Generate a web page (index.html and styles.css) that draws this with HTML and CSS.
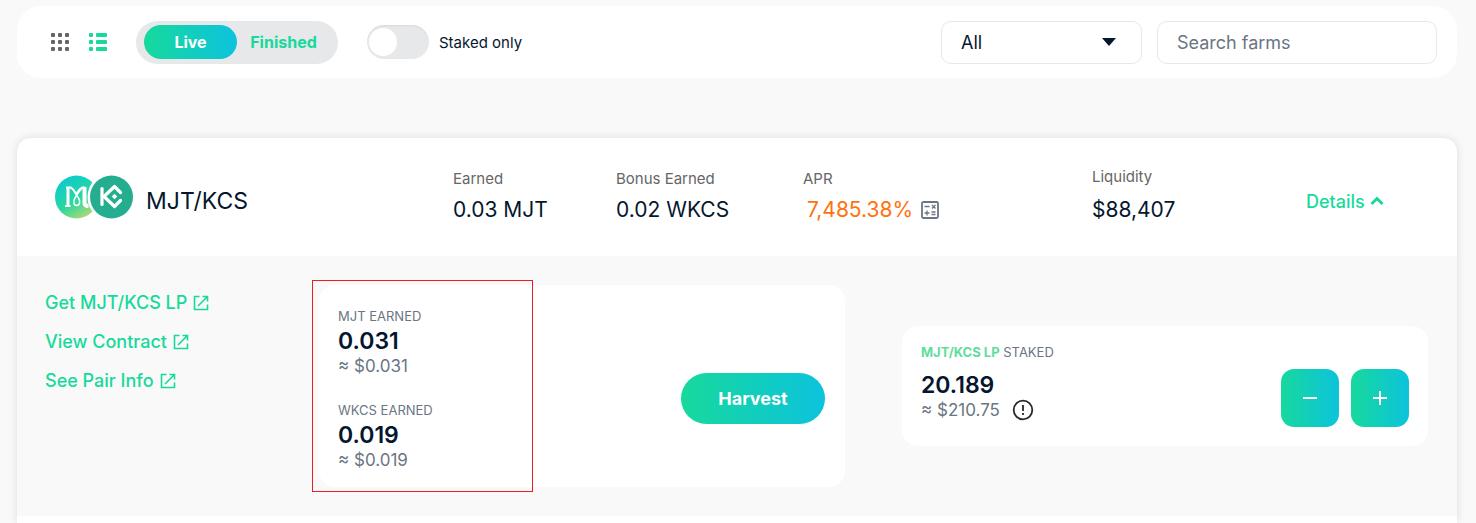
FILE: index.html
```html
<!DOCTYPE html>
<html lang="en">
    <head>
        <title>Farms</title>
        <meta charset="UTF-8">
        <meta name="viewport" content="width=device-width, initial-scale=1">
        <link rel="stylesheet" href="styles.css">
    </head>
    <body>
        <div class="toolbar">
            <div class="view-buttons">
                <button class="view-button" type="button" aria-label="Card view">
                    <svg width="18" height="18" viewBox="0 0 18 18" fill="currentColor">
                        <rect x="0" y="0" width="4" height="4" rx="1"/><rect x="7" y="0" width="4" height="4" rx="1"/><rect x="14" y="0" width="4" height="4" rx="1"/>
                        <rect x="0" y="7" width="4" height="4" rx="1"/><rect x="7" y="7" width="4" height="4" rx="1"/><rect x="14" y="7" width="4" height="4" rx="1"/>
                        <rect x="0" y="14" width="4" height="4" rx="1"/><rect x="7" y="14" width="4" height="4" rx="1"/><rect x="14" y="14" width="4" height="4" rx="1"/>
                    </svg>
                </button>
                <button class="view-button active" type="button" aria-label="Table view">
                    <svg width="18" height="18" viewBox="0 0 18 18" fill="currentColor">
                        <rect x="0" y="0" width="4" height="4" rx="1"/><rect x="7" y="0" width="11" height="4" rx="1"/>
                        <rect x="0" y="7" width="4" height="4" rx="1"/><rect x="7" y="7" width="11" height="4" rx="1"/>
                        <rect x="0" y="14" width="4" height="4" rx="1"/><rect x="7" y="14" width="11" height="4" rx="1"/>
                    </svg>
                </button>
            </div>
            <div class="tabs">
                <button class="tab selected" type="button">Live</button>
                <button class="tab" type="button">Finished</button>
            </div>
            <label class="staked">
                <input class="switch" type="checkbox">
                Staked only
            </label>
            <div class="filters">
                <div class="select-box">
                    <select class="field" aria-label="Filter farms">
                        <option>All</option>
                        <option>Hot</option>
                        <option>APR</option>
                        <option>Liquidity</option>
                    </select>
                    <svg class="caret" width="14" height="8" viewBox="0 0 14 8" fill="currentColor"><path d="M0 0h14L7 8z"/></svg>
                </div>
                <input class="field search" type="text" placeholder="Search farms" aria-label="Search farms">
            </div>
        </div>

        <div class="farms">
            <div class="farm-row">
                <div class="pair">
                    <svg class="tokens" width="78" height="44" viewBox="0 0 78 44">
                        <defs>
                            <linearGradient id="mjt" x1="0.2" y1="0" x2="0.8" y2="1">
                                <stop offset="0" stop-color="#0bc9d3"/>
                                <stop offset="0.55" stop-color="#27d8a0"/>
                                <stop offset="1" stop-color="#c5d86f"/>
                            </linearGradient>
                        </defs>
                        <circle cx="21.500" cy="22" r="21.500" fill="url(#mjt)"/>
                        <g fill="none" stroke="#fff" stroke-linejoin="round">
                            <path d="M13 13v17" stroke-width="3"/>
                            <path d="M10 31h5.500M11 12.500h5" stroke-width="2"/>
                            <path d="M15.500 12.500c2.500 1 4 4 6 7c2-4.500 4-7 8-7.500" stroke-width="2"/>
                            <path d="M29.500 12v16c0 2 1.500 3 4 3" stroke-width="4"/>
                            <path d="M26.500 14c-3 3-4 5-6 8c-3 5-1.500 8.500 1 8.500c3.500 0 4-4.500 2-7.500c-1.500-2-2.500-4-3.500-6" stroke-width="1.500"/>
                        </g>
                        <circle cx="56.500" cy="22" r="24" fill="#fff"/>
                        <circle cx="56.500" cy="22" r="21.500" fill="#24ae8f"/>
                        <g fill="none" stroke="#fff" stroke-width="3.200" stroke-linecap="round" stroke-linejoin="round">
                            <path d="M47 13.500v16"/>
                            <path d="M49 21.500L59.500 11.500l6 6M49 21.500L59.500 31.500l6-6"/>
                        </g>
                        <path d="M59.500 18.700l2.800 2.800l-2.800 2.800l-2.800-2.800z" fill="#fff"/>
                    </svg>
                    <span class="pair-name">MJT/KCS</span>
                </div>
                <div class="stat">
                    <span class="stat-label">Earned</span>
                    <span class="stat-value">0.03 MJT</span>
                </div>
                <div class="stat">
                    <span class="stat-label">Bonus Earned</span>
                    <span class="stat-value">0.02 WKCS</span>
                </div>
                <div class="stat">
                    <span class="stat-label">APR</span>
                    <span class="stat-value apr">7,485.38%
                        <button class="calculator" type="button" aria-label="ROI calculator">
                            <svg width="18" height="18" viewBox="0 0 18 18" fill="none" stroke="currentColor">
                                <rect x="1" y="1" width="16" height="16" rx="1.500" stroke-width="1.800"/>
                                <path d="M3.500 5.500h5M10.500 11h4M10.500 13.500h4M3.500 12h5M6 9.500v5M11 4l3.500 3.500M14.500 4L11 7.500" stroke-width="1.300"/>
                            </svg>
                        </button>
                    </span>
                </div>
                <div class="stat liquidity">
                    <span class="stat-label">Liquidity</span>
                    <span class="stat-value">$88,407</span>
                </div>
                <button class="details" type="button">Details
                    <svg width="14" height="10" viewBox="0 0 14 10" fill="none" stroke="currentColor" stroke-width="3"><path d="M1.500 8L7 2.500L12.500 8"/></svg>
                </button>
            </div>

            <div class="farm-panel">
                <div class="links">
                    <a class="link" href="#">Get MJT/KCS LP
                        <svg width="16" height="16" viewBox="0 0 16 16" fill="none" stroke="currentColor" stroke-width="1.600"><path d="M6.500 1.500H1.500v13h13V9.500M9.500 1.500h5v5M14.500 1.500L5 11"/></svg>
                    </a>
                    <a class="link" href="#">View Contract
                        <svg width="16" height="16" viewBox="0 0 16 16" fill="none" stroke="currentColor" stroke-width="1.600"><path d="M6.500 1.500H1.500v13h13V9.500M9.500 1.500h5v5M14.500 1.500L5 11"/></svg>
                    </a>
                    <a class="link" href="#">See Pair Info
                        <svg width="16" height="16" viewBox="0 0 16 16" fill="none" stroke="currentColor" stroke-width="1.600"><path d="M6.500 1.500H1.500v13h13V9.500M9.500 1.500h5v5M14.500 1.500L5 11"/></svg>
                    </a>
                </div>
                <div class="box harvest-box">
                    <div class="rewards">
                        <div class="amount">
                            <span class="amount-label">MJT EARNED</span>
                            <span class="amount-value">0.031</span>
                            <span class="amount-usd">≈ $0.031</span>
                        </div>
                        <div class="amount">
                            <span class="amount-label">WKCS EARNED</span>
                            <span class="amount-value">0.019</span>
                            <span class="amount-usd">≈ $0.019</span>
                        </div>
                    </div>
                    <button class="harvest" type="button">Harvest</button>
                    <div class="highlight"></div>
                </div>
                <div class="box stake-box">
                    <div class="amount">
                        <span class="amount-label"><b class="lp">MJT/KCS LP</b> STAKED</span>
                        <span class="amount-value">20.189</span>
                        <span class="amount-usd">≈ $210.75
                            <svg class="info" width="22" height="22" viewBox="0 0 22 22" fill="none" stroke="#292929" stroke-width="1.800"><circle cx="11" cy="11" r="9.300"/><path d="M11 6v6M11 14v2"/></svg>
                        </span>
                    </div>
                    <div class="stake-buttons">
                        <button class="square" type="button" aria-label="Unstake">
                            <svg width="14" height="14" viewBox="0 0 14 14" stroke="#fff" stroke-width="2"><path d="M0 7h14"/></svg>
                        </button>
                        <button class="square" type="button" aria-label="Stake">
                            <svg width="14" height="14" viewBox="0 0 14 14" stroke="#fff" stroke-width="2"><path d="M0 7h14M7 0v14"/></svg>
                        </button>
                    </div>
                </div>
            </div>
        </div>
    </body>
</html>
```
FILE: styles.css
```css
* {
    margin: 0;
    padding: 0;
    box-sizing: border-box;
    font-family: Inter, "Liberation Sans", sans-serif;
}
body {
    display: flex;
    flex-direction: column;
    gap: 60px;
    min-height: 100vh;
    padding: 6px 19px 0 17px;
    background-color: #f9f9f9;
    color: #05172e;
}
button {
    border: none;
    background: none;
    cursor: pointer;
}
svg {
    display: block;
    flex-shrink: 0;
}

/* toolbar */
.toolbar {
    display: flex;
    align-items: center;
    height: 72px;
    padding: 0 20px 0 34px;
    border-radius: 24px;
    background-color: white;
}
.view-buttons {
    display: flex;
    gap: 20px;
    margin-right: 29px;
}
.view-button {
    color: #666666;
}
.view-button.active {
    color: #18d99c;
}
.tabs {
    display: flex;
    align-items: center;
    height: 43px;
    padding: 0 8px;
    border-radius: 22px;
    background-color: #e7e8ea;
}
.tab {
    width: 93px;
    height: 34px;
    border-radius: 17px;
    font-size: 16px;
    font-weight: 700;
    color: #18d99c;
}
.tab.selected {
    background: linear-gradient(90deg, #17d99c, #0cc3dd);
    color: white;
}
.staked {
    display: flex;
    align-items: center;
    gap: 10px;
    margin-left: 29px;
    font-size: 15px;
}
.switch {
    appearance: none;
    display: flex;
    align-items: center;
    width: 62px;
    height: 34px;
    padding: 0 2px;
    border-radius: 17px;
    background-color: #e7e8ea;
    box-shadow: inset 0 2px 2px -1px rgba(74, 74, 104, 0.1);
}
.switch::before {
    content: "";
    width: 28px;
    height: 28px;
    border-radius: 50%;
    background-color: white;
}
.switch:checked {
    justify-content: flex-end;
    background-color: #18d99c;
}
.filters {
    display: flex;
    gap: 15px;
    margin-left: auto;
}
.select-box {
    position: relative;
}
.field {
    width: 201px;
    height: 43px;
    padding: 0 19px;
    border: 1px solid #e7e8ea;
    border-radius: 10px;
    background-color: white;
    font-size: 18px;
    color: #05172e;
}
select.field {
    appearance: none;
}
.field.search {
    width: 280px;
}
.field::placeholder {
    color: #6b7583;
}
.caret {
    position: absolute;
    right: 26px;
    top: 17px;
    pointer-events: none;
}

/* farm list */
.farms {
    flex: 1;
    border-radius: 14px 14px 0 0;
    background-color: white;
    box-shadow: 0 0 8px rgba(25, 19, 60, 0.12);
}
.farm-row {
    display: grid;
    grid-template-columns: 398fr 163fr 187fr 289fr 214fr 151fr;
    align-items: center;
    height: 118px;
    padding-left: 38px;
}
.pair {
    display: flex;
    align-items: center;
    gap: 13px;
}
.pair-name {
    padding-top: 8px;
    font-size: 23px;
}
.stat {
    display: flex;
    flex-direction: column;
    gap: 5px;
}
.stat-label {
    font-size: 15px;
    line-height: 20px;
    color: #666666;
}
.stat-value {
    font-size: 21px;
    line-height: 32px;
    white-space: nowrap;
}
.liquidity {
    gap: 7px;
    padding-bottom: 2px;
}
.apr {
    display: flex;
    align-items: center;
    gap: 8px;
    padding-left: 4px;
    color: #ff720d;
}
.calculator {
    color: #6b7583;
}
.details {
    display: flex;
    align-items: center;
    gap: 5px;
    padding-top: 8px;
    font-size: 18px;
    font-weight: 500;
    color: #18d99c;
}

/* opened row */
.farm-panel {
    display: grid;
    grid-template-columns: 217px 1fr 1fr;
    gap: 57px;
    align-items: center;
    padding: 29px 29px 29px 28px;
    background-color: #f9f9f9;
}
.links {
    display: flex;
    flex-direction: column;
    align-self: start;
    gap: 15px;
    padding-top: 6px;
}
.link {
    display: flex;
    align-items: center;
    gap: 6px;
    font-size: 18px;
    font-weight: 500;
    line-height: 24px;
    text-decoration: none;
    color: #18d99c;
}
.box {
    display: flex;
    align-items: center;
    justify-content: space-between;
    padding: 0 19px;
    border-radius: 16px;
    background-color: white;
}
.harvest-box {
    position: relative;
    height: 202px;
    padding-right: 20px;
}
.highlight {
    position: absolute;
    top: -5px;
    bottom: -5px;
    left: -7px;
    width: 42%;
    border: 1px solid #ec1c24;
    pointer-events: none;
}
.rewards {
    display: flex;
    flex-direction: column;
    gap: 24px;
    padding-top: 4px;
}
.amount {
    display: flex;
    flex-direction: column;
}
.amount-label {
    font-size: 13px;
    line-height: 20px;
    color: #6b7583;
}
.amount-value {
    font-size: 23px;
    font-weight: 600;
    line-height: 30px;
}
.amount-usd {
    display: flex;
    align-items: center;
    gap: 12px;
    font-size: 17px;
    line-height: 20px;
    color: #6b7583;
}
.lp {
    color: #5fdd9d;
}
.harvest {
    width: 144px;
    height: 51px;
    margin-top: 24px;
    border-radius: 26px;
    background: linear-gradient(90deg, #17d99c, #0cc3dd);
    font-size: 18px;
    font-weight: 700;
    color: white;
}
.stake-box {
    height: 120px;
}
.stake-box .amount {
    padding-bottom: 10px;
}
.stake-box .amount-label {
    margin-bottom: 8px;
}
.info {
    margin: -1px 0;
}
.stake-buttons {
    display: flex;
    gap: 12px;
    margin-top: 24px;
}
.square {
    display: flex;
    align-items: center;
    justify-content: center;
    width: 58px;
    height: 58px;
    border-radius: 13px;
    background: linear-gradient(90deg, #17d99c, #0cc3dd);
}
```
